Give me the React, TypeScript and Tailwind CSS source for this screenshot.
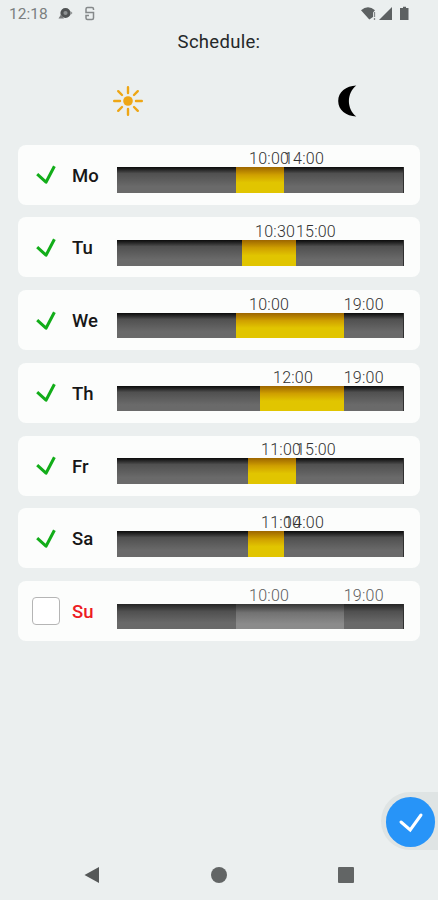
import React from "react";

type Day = {
  name: string;
  start: string;
  end: string;
  active: boolean;
};

const DAYS: Day[] = [
  { name: "Mo", start: "10:00", end: "14:00", active: true },
  { name: "Tu", start: "10:30", end: "15:00", active: true },
  { name: "We", start: "10:00", end: "19:00", active: true },
  { name: "Th", start: "12:00", end: "19:00", active: true },
  { name: "Fr", start: "11:00", end: "15:00", active: true },
  { name: "Sa", start: "11:00", end: "14:00", active: true },
  { name: "Su", start: "10:00", end: "19:00", active: false },
];

// share of the day that has passed, in percent
function toPercent(time: string) {
  const [hours, minutes] = time.split(":").map(Number);
  return ((hours + minutes / 60) / 24) * 100;
}

function StatusBar() {
  return (
    <header className="flex h-7 items-center pl-[9px] pr-[28px]">
      <span className="w-[38px] whitespace-nowrap text-[15.5px] leading-7 text-[#7b7f80]">
        12:18
      </span>
      <svg className="ml-[11px] h-4 w-4" viewBox="0 0 16 16">
        <circle cx="7.5" cy="7" r="3.6" fill="#8d9192" stroke="#505354" strokeWidth="3" />
        <path d="M0.500 12.500L3 8.500L6 12.500Z" fill="#77797a" />
        <path d="M12.500 5L14.500 7L12.500 9Z" fill="#8d9192" />
      </svg>
      <svg className="ml-[8px] h-4 w-4" viewBox="0 0 16 16" fill="none" stroke="#85898a" strokeWidth="1.5">
        <path d="M11.500 4V3Q11.500 1.500 10 1.500H5.500Q4 1.500 4 3V6.500H11.500V12Q11.500 13.500 10 13.500H5.500Q4 13.500 4 12V9.500H7" />
      </svg>
      <svg className="ml-auto h-4 w-[50px]" viewBox="0 0 50 16" fill="#5d6162">
        <path d="M1 4.2Q8-1.6 15 4.2L13 6.5V11L9.300 13.500Z" />
        <path d="M14.500 6V11M14.500 12V14" stroke="#85898a" strokeWidth="1.3" />
        <path d="M19 14L32 1V14Z" />
        <path d="M41 2H43V0.800H46V2H48.500V14H40V2Z" />
      </svg>
    </header>
  );
}

function Checkbox({ checked }: { checked: boolean }) {
  if (!checked) {
    return <span className="h-7 w-7 rounded-[4px] border-[1.5px] border-[#b5b5b5] bg-white" />;
  }
  return (
    <svg className="h-7 w-7" viewBox="0 0 28 28" fill="none" stroke="#12ad19" strokeWidth="3">
      <path d="M5.200 14.200L14 22.200L22.400 6.200" strokeLinejoin="round" />
    </svg>
  );
}

function Timeline({ day }: { day: Day }) {
  const from = toPercent(day.start);
  const to = toPercent(day.end);
  const label = day.active ? "text-[#303030]" : "text-[#5c5c5c]";

  return (
    <div className="relative ml-auto mt-[3px] h-[25.5px] w-[287px]">
      <div
        className={
          day.active
            ? "h-full bg-linear-to-b from-[#101010] from-2% via-[#505050] via-25% to-[#6a6a6a] to-75%"
            : "h-full bg-linear-to-b from-[#252525] via-[#505050] via-30% to-[#696969] to-75%"
        }
      />
      <div
        className={
          day.active
            ? "absolute inset-y-0 bg-linear-to-b from-[#9c6500] via-[#cf9f00] via-30% to-[#e1c500] to-60%"
            : "absolute inset-y-0 bg-linear-to-b from-[#353535] via-[#727272] via-35% to-[#8b8b8b] to-80%"
        }
        style={{ left: `${from}%`, width: `${to - from}%` }}
      />
      <div className="absolute inset-y-0 right-0 w-px bg-[#303030]" />
      <span
        className={`absolute -top-[17px] ml-[13px] text-[16px] font-light leading-[18px] tracking-[0.25px] ${label}`}
        style={{ left: `${from}%` }}
      >
        {day.start}
      </span>
      <span
        className={`absolute -top-[17px] text-[16px] font-light leading-[18px] tracking-[0.25px] ${label}`}
        style={{ left: `${to}%` }}
      >
        {day.end}
      </span>
    </div>
  );
}

function DayRow({ day }: { day: Day }) {
  return (
    <li className="mb-[12.75px] flex h-[60px] items-center rounded-lg bg-[#fcfdfc] pl-[14px] pr-[16.5px] pt-[8px]">
      <div className="flex h-[52px] w-full items-center">
        <div className="-mt-[9px] flex items-center">
          <Checkbox checked={day.active} />
          <span
            className={`ml-3 mt-[3px] text-[18.5px] font-medium leading-6 tracking-[0.1px] ${
              day.active ? "text-[#171717]" : "text-[#ed1c24]"
            }`}
          >
            {day.name}
          </span>
        </div>
        <Timeline day={day} />
      </div>
    </li>
  );
}

export default function App() {
  return (
    <div className="flex h-[900px] w-[438px] flex-col overflow-hidden bg-[#ebefef] font-[Roboto,sans-serif]">
      <StatusBar />
      <h1 className="h-7 text-center text-[18.5px] leading-7 tracking-[0.3px] text-[#252829]">
        Schedule:
      </h1>
      <div className="flex h-[89px] items-center justify-between pl-[112px] pr-[76px]">
        <svg className="h-8 w-8" viewBox="0 0 32 32" stroke="#eea615" strokeWidth="2.4" strokeLinecap="round">
          <circle cx="16" cy="16" r="4.800" fill="#eea615" stroke="none" />
          <path d="M16 2.200V8M16 24V29.800M2.200 16H8M24 16H29.800M6.200 6.200L10 10M22 22L25.800 25.800M6.200 25.800L10 22M22 10L25.800 6.200" />
        </svg>
        <svg className="h-8 w-6" viewBox="0 0 24 32" fill="#000000">
          <path d="M18.300 0.500C8 1 0.200 7 0.200 16S8 31 18.300 31.500C8.500 24 8.500 8 18.300 0.500Z" />
        </svg>
      </div>
      <ul className="-mt-[0.3px] flex-1 px-[18px]">
        {DAYS.map((day) => (
          <DayRow key={day.name} day={day} />
        ))}
      </ul>
      <div className="flex h-[58px] justify-end">
        <div className="flex h-[58px] w-[57px] items-center justify-end rounded-l-full bg-[#dfe4e4] pt-[2px] pr-[3px]">
          <button className="flex h-[50px] w-[49px] items-center justify-center rounded-full bg-[#2794f8]">
            <svg className="h-7 w-7" viewBox="0 0 28 28" fill="none" stroke="#ffffff" strokeWidth="3" strokeLinecap="round">
              <path d="M4 14L13.200 22L24 7" />
            </svg>
          </button>
        </div>
      </div>
      <nav className="flex h-[50px] items-center justify-between pl-[84px] pr-[84px]">
        <svg className="h-[18px] w-4" viewBox="0 0 16 18">
          <path d="M0.500 9L15 1V17Z" fill="#555858" />
        </svg>
        <span className="h-4 w-4 rounded-full bg-[#626565]" />
        <span className="h-4 w-4 rounded-[1px] bg-[#626565]" />
      </nav>
    </div>
  );
}
